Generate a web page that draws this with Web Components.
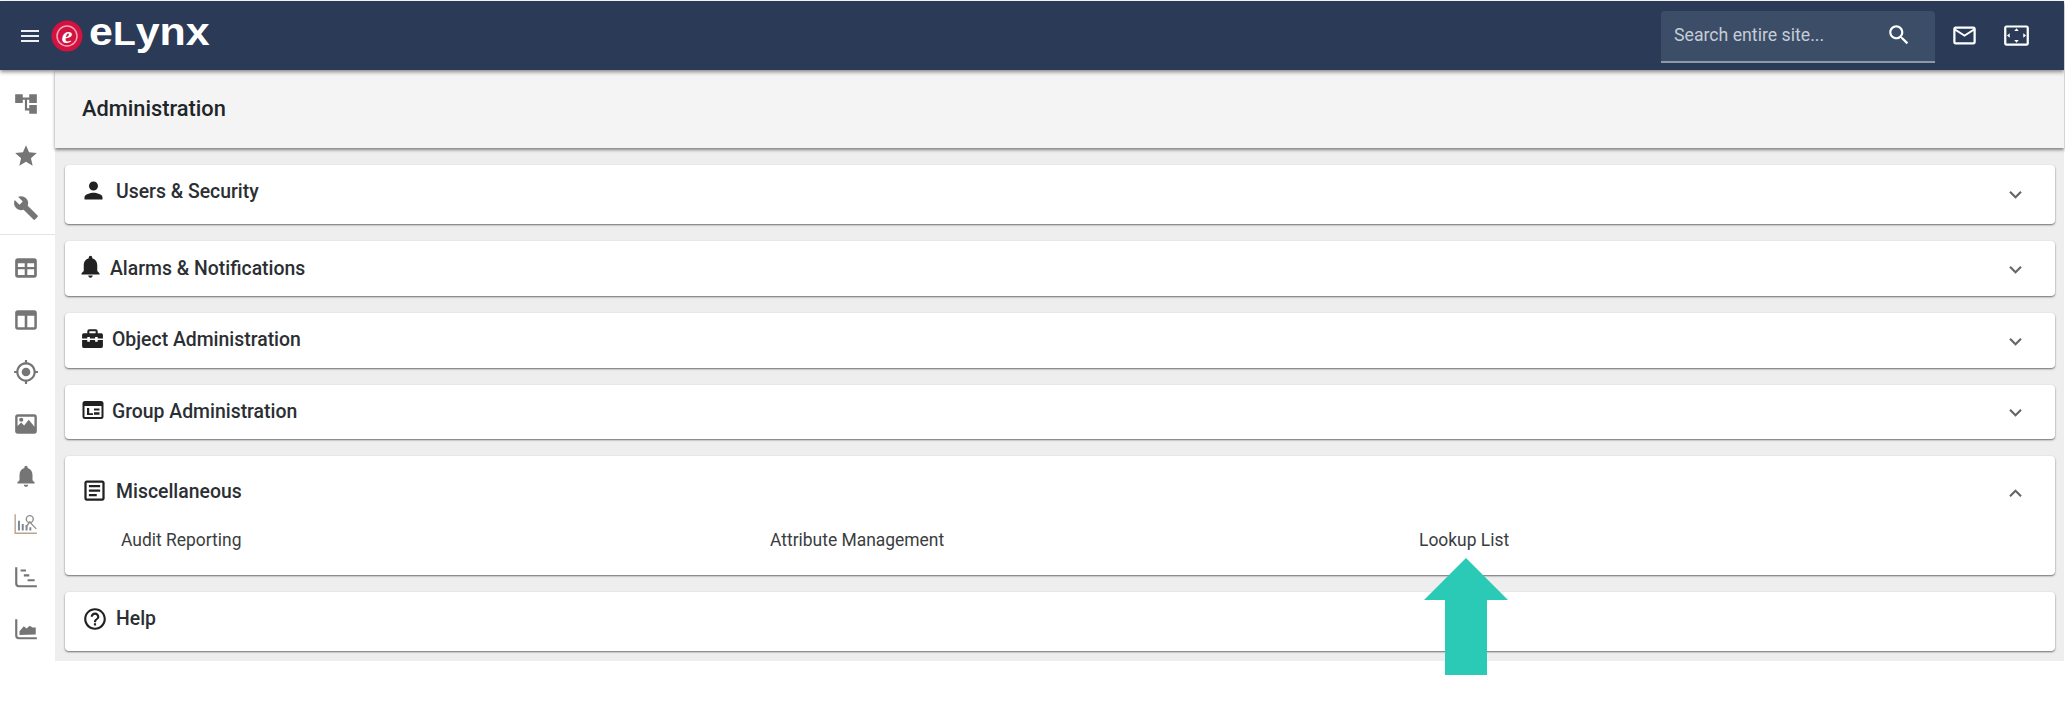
<!DOCTYPE html>
<html lang="en"><head><meta charset="utf-8"><title>Administration</title>
<style>
html,body{margin:0;padding:0;background:#fff;font-family:Roboto,"Liberation Sans",sans-serif;color:#212529}
body{width:2065px;height:705px;overflow:hidden}
</style></head><body>
<admin-app></admin-app>
<script>
const P={
menu:'M3 18h18v-2H3v2zm0-5h18v-2H3v2zm0-7v2h18V6H3z',
tree:'M22 11V3h-7v3H9V3H2v8h7V8h2v10h4v3h7v-8h-7v3h-2V8h2v3z',
star:'M12 17.27L18.18 21l-1.64-7.03L22 9.24l-7.19-.61L12 2 9.19 8.63 2 9.24l5.46 4.73L5.82 21z',
build:'M22.7 19l-9.1-9.1c.9-2.3.4-5-1.5-6.9-2-2-5-2.4-7.4-1.3L9 6 6 9 1.6 4.7C.4 7.1.9 10.1 2.9 12.1c1.9 1.9 4.6 2.4 6.9 1.5l9.1 9.1c.4.4 1 .4 1.4 0l2.3-2.3c.5-.4.5-1.1.1-1.4z',
table:'M4.5 3h15A2.5 2.5 0 0 1 22 5.5v13a2.5 2.5 0 0 1-2.5 2.5h-15A2.5 2.5 0 0 1 2 18.5v-13A2.5 2.5 0 0 1 4.5 3zM4.5 7.5V11h6.3V7.5zM13.2 7.5V11h6.3V7.5zM4.5 13.2v5.3h6.3v-5.3zM13.2 13.2v5.3h6.3v-5.3z',
layout:'M4.5 3h15A2.5 2.5 0 0 1 22 5.5v13a2.5 2.5 0 0 1-2.5 2.5h-15A2.5 2.5 0 0 1 2 18.5v-13A2.5 2.5 0 0 1 4.5 3zM4.3 8v10.7h6.5V8zM13.2 8v10.7h6.5V8z',
gps:'M12 8c-2.21 0-4 1.79-4 4s1.79 4 4 4 4-1.79 4-4-1.79-4-4-4zm8.94 3c-.46-4.17-3.77-7.48-7.94-7.94V1h-2v2.06C6.83 3.52 3.52 6.83 3.06 11H1v2h2.06c.46 4.17 3.77 7.48 7.94 7.94V23h2v-2.06c4.17-.46 7.48-3.77 7.94-7.94H23v-2h-2.06zM12 19c-3.87 0-7-3.13-7-7s3.13-7 7-7 7 3.13 7 7-3.13 7-7 7z',
image:'M4.5 3h15A2.5 2.5 0 0 1 22 5.5v13a2.5 2.5 0 0 1-2.5 2.5h-15A2.5 2.5 0 0 1 2 18.5v-13A2.5 2.5 0 0 1 4.5 3zM4.2 5.2v8.6l3.3-3.3 2.8 2.8 4.2-5.3 5.3 6.5V5.2zM7.6 6.2a1.9 1.9 0 1 1 0 3.8 1.9 1.9 0 0 1 0-3.8z',
bell:'M12 22c1.1 0 2-.9 2-2h-4c0 1.1.89 2 2 2zm6-6v-5c0-3.07-1.64-5.64-4.5-6.32V4c0-.83-.67-1.5-1.5-1.5s-1.5.67-1.5 1.5v.68C7.63 5.36 6 7.92 6 11v5l-2 2v1h16v-1l-2-2z',
steps:'M2 3h2v15a1.5 1.5 0 0 0 1.5 1.5H22v2H5.5A3.5 3.5 0 0 1 2 18zM7 5h5v2H7zM10 9.5h5v2h-5zM13.5 14H20v2h-6.5z',
area:'M2 3h2v15a1.5 1.5 0 0 0 1.5 1.5H22v2H5.5A3.5 3.5 0 0 1 2 18zM6 17.5V14l4-4.5 2.5 2 3-2.5 2.5 1.5 3 0v6.5z',
person:'M12 12c2.21 0 4-1.79 4-4s-1.79-4-4-4-4 1.79-4 4 1.79 4 4 4zm0 2c-2.67 0-8 1.34-8 4v2h16v-2c0-2.66-5.33-4-8-4z',
case:'M9 3h6a2 2 0 0 1 2 2v2h3.5A1.5 1.5 0 0 1 22 8.500V12h-5v-1.500h-2.500V12h-5v-1.500H7V12H2V8.500A1.500 1.500 0 0 1 3.500 7H7V5a2 2 0 0 1 2-2zM9 5v2h6V5zM2 13.500h5V15h2.500v-1.500h5V15H17v-1.500h5V19.500a1.500 1.500 0 0 1-1.500 1.500h-17A1.500 1.500 0 0 1 2 19.500z',
card:'M4 3h16a2.500 2.500 0 0 1 2.500 2.500v13A2.500 2.500 0 0 1 20 21H4a2.500 2.500 0 0 1-2.500-2.500v-13A2.500 2.500 0 0 1 4 3zM3.500 8v10.500a.5.5 0 0 0 .5.500h16a.5.5 0 0 0 .5-.500V8zM6 10h2.200v5.200H12V17H6zM13 10.500h5.500v2H13zM13 14.300h5.500v2.500H13z',
article:'M14 17H7v-2h7v2zm3-4H7v-2h10v2zm0-4H7V7h10v2zm2-6H5c-1.1 0-2 .9-2 2v14c0 1.1.9 2 2 2h14c1.100 0 2-.9 2-2V5c0-1.100-.9-2-2-2zm0 16H5V5h14v14z',
help:'M11 18h2v-2h-2v2zm1-16C6.48 2 2 6.48 2 12s4.48 10 10 10 10-4.48 10-10S17.52 2 12 2zm0 18c-4.41 0-8-3.59-8-8s3.59-8 8-8 8 3.59 8 8-3.59 8-8 8zm0-14c-2.21 0-4 1.79-4 4h2c0-1.100.9-2 2-2s2 .9 2 2c0 2-3 1.750-3 5h2c0-2.250 3-2.500 3-5 0-2.210-1.790-4-4-4z',
down:'M16.59 8.59L12 13.17 7.41 8.59 6 10l6 6 6-6z',
up:'M12 8l-6 6 1.41 1.41L12 10.83l4.59 4.58L18 14z',
search:'M15.5 14h-.79l-.28-.27C15.41 12.59 16 11.11 16 9.5 16 5.91 13.09 3 9.5 3S3 5.91 3 9.5 5.91 16 9.5 16c1.61 0 3.09-.59 4.23-1.57l.27.28v.79l5 4.99L20.49 19l-4.99-5zm-6 0C7.01 14 5 11.99 5 9.5S7.01 5 9.5 5 14 7.01 14 9.5 11.99 14 9.5 14z',
mail:'M20 4H4c-1.1 0-1.99.9-1.99 2L2 18c0 1.1.9 2 2 2h16c1.1 0 2-.9 2-2V6c0-1.1-.9-2-2-2zm0 14H4V8l8 5 8-5v10zm-8-7L4 6h16l-8 5z',
scan:'M12.01 5.5L10 8h4l-1.99-2.5zM18 10v4l2.5-1.99L18 10zM6 10l-2.5 2.01L6 14v-4zm8 6h-4l2.01 2.5L14 16zm7-13H3c-1.1 0-2 .9-2 2v14c0 1.1.9 2 2 2h18c1.1 0 2-.9 2-2V5c0-1.1-.9-2-2-2zm0 16.01H3V4.99h18v14.02z'
};
const svg=(n,s,c='currentColor')=>`<svg width="${s}" height="${s}" viewBox="0 0 24 24" fill="${c}" fill-rule="evenodd" aria-hidden="true"><path d="${P[n]}"/></svg>`;
const analytics=`<svg width="26" height="26" viewBox="0 0 24 24" fill="none" stroke="#8f8f8f" stroke-width="1.300" aria-hidden="true"><path d="M2 3v17.500h20" stroke="#b9a58f"/><path d="M5.500 18V9M9 18v-6M12.500 18v-5M16 18v-3" stroke-width="1.800" stroke="#7b8794"/><circle cx="15.500" cy="7.500" r="3.200"/><path d="M12 15l3.500-5 3 3.500 3 3" /></svg>`;

class AppHeader extends HTMLElement{constructor(){super();this.attachShadow({mode:'open'}).innerHTML=`<style>
:host{display:flex;align-items:center;box-sizing:border-box;height:69px;margin-top:1px;width:2064px;background:#2a3a57;color:#fff;box-shadow:0 2px 4px rgba(0,0,0,.45);position:relative;z-index:3}
.m{display:flex;margin-left:18px;color:#eef0f4}
.c{margin-left:9px;display:flex}
.b{margin-left:6px;font:700 38px/1 "Liberation Sans",sans-serif;letter-spacing:0;color:#fff;display:block;transform:scaleX(1.13);transform-origin:left center;white-space:nowrap;margin-top:-7px}
.b span{font-size:33px}
.sp{flex:1}
.s{width:274px;height:52px;box-sizing:border-box;background:#3c4d68;border-bottom:2px solid #8d98a8;border-radius:4px 4px 0 0;display:flex;align-items:center;padding:0 23px 2px 13px;font-size:17.700px;color:#c6ccd6;justify-content:space-between;margin-top:2px}
.s svg{color:#fff}
.i{display:flex;margin-left:16px}
.i2{margin-left:25px;margin-right:34px;display:flex}
</style>
<div class="m">${svg('menu',24)}</div>
<div class="c"><svg width="32" height="32" viewBox="0 0 32 32" aria-hidden="true"><circle cx="16" cy="16" r="15.500" fill="#d3123f"/><circle cx="16" cy="16" r="10" fill="none" stroke="#f0a5b8" stroke-width="1.500"/><text x="16" y="23" text-anchor="middle" font-family="Liberation Serif,serif" font-style="italic" font-weight="700" font-size="24" fill="#fff">e</text></svg></div>
<div class="b">e<span>L</span>ynx</div>
<div class="sp"></div>
<div class="s">Search entire site...${svg('search',26)}</div>
<div class="i">${svg('mail',27)}</div>
<div class="i2">${svg('scan',27)}</div>`}}
customElements.define('app-header',AppHeader);

class SideNav extends HTMLElement{constructor(){super();
const it=(x,o='')=>`<div class="it" style="${o}">${x}</div>`;
const g='#757575';
this.attachShadow({mode:'open'}).innerHTML=`<style>
:host{display:block;box-sizing:border-box;width:55px;height:591px;background:#fff;padding-top:8px;color:${g}}
.it{height:52px;display:flex;align-items:center;justify-content:center;padding-right:3px}
.sep{border-bottom:1px solid #e4e4e4;padding-bottom:0;margin-bottom:7px}
</style>
<div class="sep">${it(svg('tree',26))}${it(svg('star',26))}${it(svg('build',26))}</div>
${it(svg('table',26))}${it(svg('layout',26))}${it(svg('gps',26))}${it(svg('image',26))}${it(svg('bell',26))}
${it(analytics,'margin-top:-4px')}${it(svg('steps',26),'margin-top:1px')}${it(svg('area',26))}`}}
customElements.define('side-nav',SideNav);

class TitleBar extends HTMLElement{constructor(){super();this.attachShadow({mode:'open'}).innerHTML=`<style>
:host{display:flex;align-items:center;box-sizing:border-box;height:78px;padding:0 0 1px 27px;background:#f4f4f4;box-shadow:0 2px 3px rgba(0,0,0,.45);font-size:21.800px;font-weight:500;color:#212529;position:relative;z-index:2;flex:none}
</style><slot></slot>`}}
customElements.define('title-bar',TitleBar);

class AccPanel extends HTMLElement{constructor(){super();
const open=this.hasAttribute('open');
const head=this.getAttribute('head')||'';
const ic=this.getAttribute('icon'),s=this.getAttribute('size')||27;
const chev=this.hasAttribute('nochev')?'':`<span class="ch">${svg(open?'up':'down',25)}</span>`;
this.attachShadow({mode:'open'}).innerHTML=`<style>
:host{display:block;box-sizing:border-box;height:var(--h);background:#fff;border-radius:4px;box-shadow:0 1px 2px rgba(0,0,0,.55);overflow:hidden}
.h{display:flex;align-items:center;height:var(--hh,100%);padding-left:var(--pl);font-size:19.400px;font-weight:500;color:#2b2f33}
.ic{display:flex;width:${s}px;height:${s}px;color:#212121;margin-top:var(--it,-5px)}
.t{margin-left:var(--g);flex:1;margin-bottom:var(--tb,0)}
.ch{display:flex;margin-right:27px;color:#666;margin-top:var(--cm,1px)}
.b{padding:4px 0 0 56px;display:grid;grid-template-columns:repeat(3,649px);font-size:17.450px;color:#3a3d40}
</style>
<div class="h"><span class="ic">${svg(ic,s)}</span><span class="t">${head}</span>${chev}</div>
<div class="b"><slot></slot></div>`}}
customElements.define('acc-panel',AccPanel);

class AdminApp extends HTMLElement{constructor(){super();this.attachShadow({mode:'open'}).innerHTML=`<style>
:host{display:block;position:relative;width:2065px;height:705px}
.r{display:flex;align-items:flex-start}
.main{width:2009px;height:591px;background:#eee;display:flex;flex-direction:column}
.list{display:flex;flex-direction:column;gap:17px;padding:17px 9px 0 10px}
.arrow{position:absolute;left:1424px;top:557px;z-index:5;display:block}
</style>
<app-header></app-header>
<div class="r"><side-nav></side-nav><div class="main">
<title-bar>Administration</title-bar>
<div class="list">
<acc-panel head="Users &amp; Security" icon="person" style="--h:59px;--pl:15px;--g:9px;--tb:6px;--it:-8px;--cm:0px"></acc-panel>
<acc-panel head="Alarms &amp; Notifications" icon="bell" style="--h:55px;--pl:12px;--g:6px"></acc-panel>
<acc-panel head="Object Administration" icon="case" size="25" style="--h:55px;--pl:15px;--g:7px;--tb:2px"></acc-panel>
<acc-panel head="Group Administration" icon="card" size="24" style="--h:54px;--pl:16px;--g:7px;--tb:1px"></acc-panel>
<acc-panel head="Miscellaneous" icon="article" open style="--h:119px;--hh:70px;--pl:16px;--g:8px;--it:-2px;--cm:4px"><span>Audit Reporting</span><span>Attribute Management</span><span>Lookup List</span></acc-panel>
<acc-panel head="Help" icon="help" size="26" nochev style="--h:59px;--pl:17px;--g:8px;--it:-5px;--tb:6px"></acc-panel>
</div></div></div>
<svg class="arrow" width="84" height="117" viewBox="0 0 84 117" aria-hidden="true"><path d="M42 0L84 42H63V117H21V42H0z" fill="#2bcab6"/></svg>`}}
customElements.define('admin-app',AdminApp);
</script></body></html>
